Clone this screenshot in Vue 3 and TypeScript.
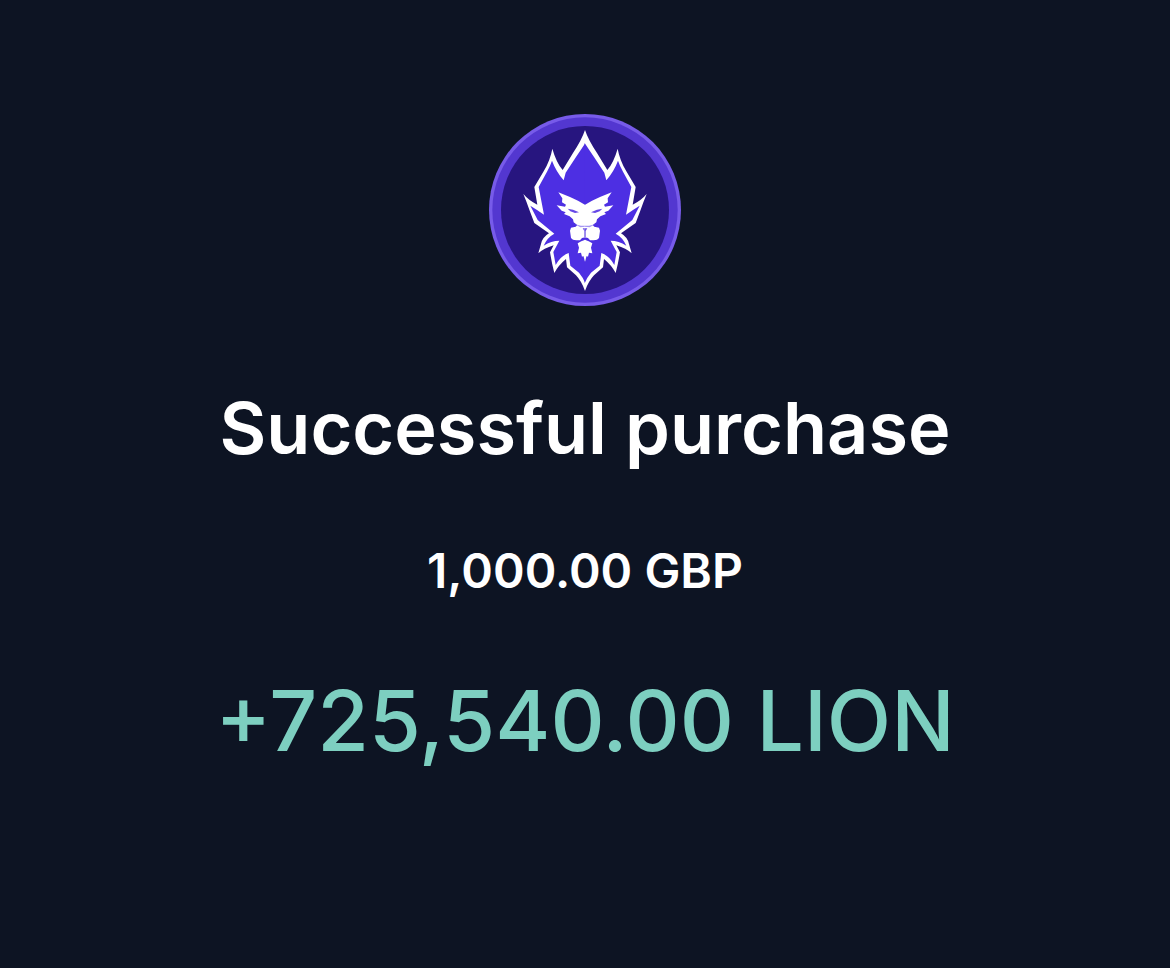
<script setup lang="ts">
interface Purchase {
  paid: number
  currency: string
  received: number
  token: string
}

const purchase: Purchase = {
  paid: 1000,
  currency: 'GBP',
  received: 725540,
  token: 'LION',
}

const format = (value: number): string =>
  value.toLocaleString('en-GB', { minimumFractionDigits: 2, maximumFractionDigits: 2 })
</script>

<template>
  <main class="receipt">
    <svg class="coin" viewBox="12 12 576 576" role="img" aria-label="LION token">
      <defs>
        <g id="half-face">
          <path
            d="M301 285 L279 272 L255 261 L220 247 L232 265 L231 277 L243 284 L240 290 L215 286 L230 302 L242 307 L237 312 L254 319 L264 328 L266 337 L277 345 L272 350 L258 353 L255 362 L258 384 L264 389 L274 391 L285 391 L291 384 L301 382 Z"
            fill="#fff"
          />
          <path d="M248 296 L264 299 L282 307 L270 309 L256 304 Z" fill="#6648e6" />
          <path d="M270 343 L288 347 L301 347 L301 350 L286 352 Z" fill="#a596f2" />
          <path d="M301 355 L293 355 L298 363 L298 382 L301 382 Z" fill="#6b50e4" />
          <path
            d="M301 389 L289 394 L278 400 L282 413 L278 430 L288 428 L291 440 L295 438 L301 455 Z"
            fill="#fff"
          />
        </g>
        <g id="half-mane">
          <path
            d="M300 60 Q290 90 264 129 L233 180 Q214 158 202 116 Q196 150 176 184 L148 231 L157 284 Q132 272 115 252 Q125 276 133 299 L148 339 L192 370 Q172 382 168 402 L160 430 Q176 415 206 406 L195 427 Q200 458 208 489 Q220 466 243 447 L246 472 L273 496 Q290 514 300 543 Z"
            fill="#fff"
          />
          <path
            d="M301 99 Q290 116 273 141 L242 188 L236 211 Q213 184 201 152 Q196 167 186 185 L161 231 L177 314 Q154 298 136 287 L158 330 L208 371 Q187 382 176 407 Q199 392 223 392 L205 426 L212 465 Q226 438 251 429 L256 467 L282 488 Q294 502 301 520 Z"
            fill="#4d2fe3"
          />
        </g>
      </defs>
      <circle cx="300" cy="300" r="288" fill="#775be9" />
      <circle cx="300" cy="300" r="278" fill="#5337d0" />
      <circle cx="300" cy="300" r="252" fill="#27157f" />
      <use href="#half-mane" />
      <use href="#half-mane" transform="translate(600 0) scale(-1 1)" />
      <use href="#half-face" />
      <use href="#half-face" transform="translate(600 0) scale(-1 1)" />
    </svg>
    <h1 class="title">Successful purchase</h1>
    <p class="paid">{{ format(purchase.paid) }} {{ purchase.currency }}</p>
    <p class="received">+{{ format(purchase.received) }} {{ purchase.token }}</p>
  </main>
</template>

<style>
body {
  margin: 0;
  background: #0d1423;
}
</style>

<style scoped>
.receipt {
  display: flex;
  flex-direction: column;
  align-items: center;
  gap: 70px;
  box-sizing: border-box;
  min-height: 100vh;
  padding: 114px 24px;
  background: #0d1423;
  color: #fff;
  font-family: Inter, 'Liberation Sans', sans-serif;
  text-align: center;
}

.coin {
  display: block;
  width: 192px;
  height: 192px;
  flex: none;
}

.title,
.paid,
.received {
  margin: 0;
}

.title {
  padding-top: 8px;
  font-size: 72px;
  font-weight: 600;
  line-height: 88px;
}

.paid {
  font-size: 48px;
  font-weight: 600;
  line-height: 58px;
}

.received {
  color: #7dcfc0;
  font-size: 84px;
  font-weight: 500;
  line-height: 102px;
}
</style>
